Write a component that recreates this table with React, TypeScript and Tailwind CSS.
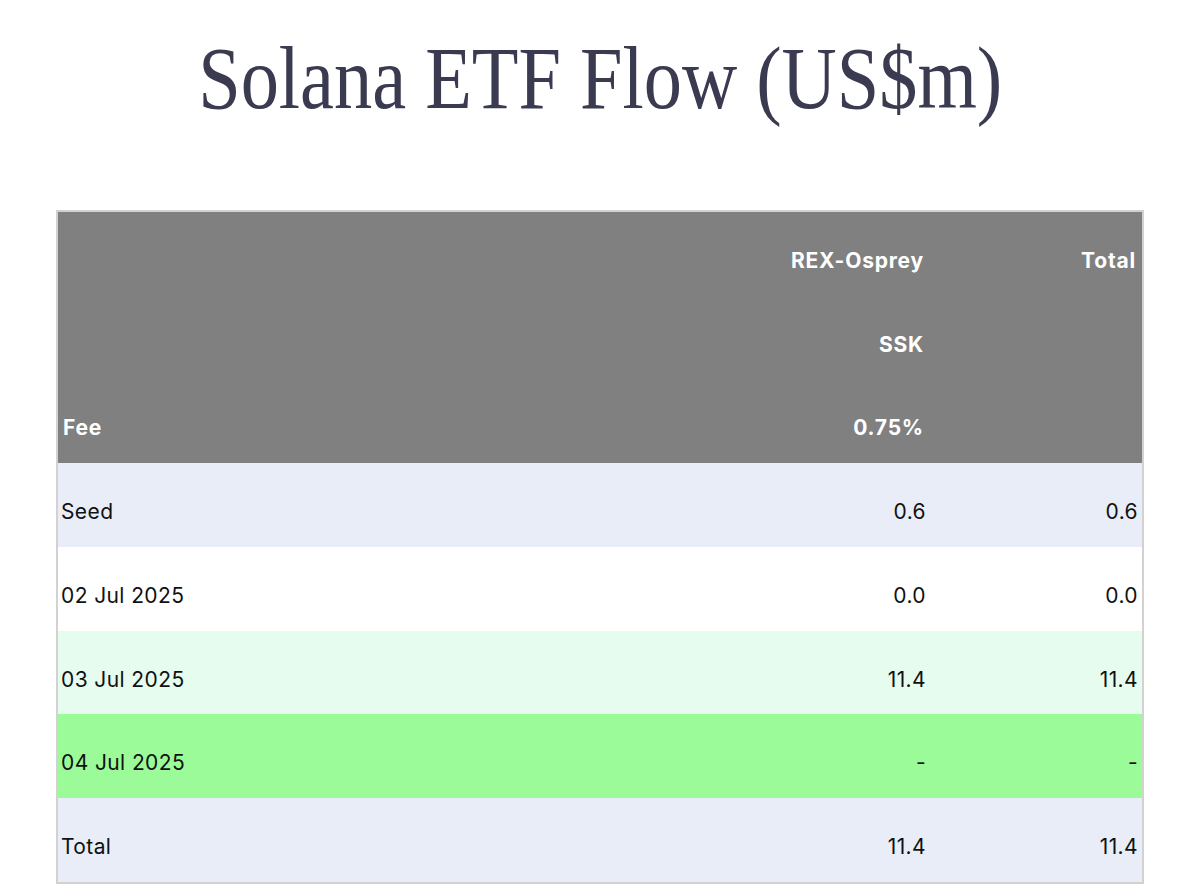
const rows = [
  { label: 'Seed', rex: '0.6', total: '0.6', bg: 'bg-[#e8edf7]', h: 'h-[84px]' },
  { label: '02 Jul 2025', rex: '0.0', total: '0.0', bg: 'bg-white', h: 'h-[84px]' },
  { label: '03 Jul 2025', rex: '11.4', total: '11.4', bg: 'bg-[#e6fcee]', h: 'h-[83px]' },
  { label: '04 Jul 2025', rex: '-', total: '-', bg: 'bg-[#9afb98]', h: 'h-[84px]' },
  { label: 'Total', rex: '11.4', total: '11.4', bg: 'bg-[#e8edf7]', h: 'h-[84px]' },
]

export default function App() {
  return (
    <div className="w-[1200px] h-[896px] bg-white overflow-hidden">
      {/* Title */}
      <div className="pt-[35px] flex justify-center">
        <h1
          className="inline-block h-[88px] text-[88px] leading-none text-[#3a3a50] scale-x-[0.868] whitespace-nowrap"
          style={{ fontFamily: '"Liberation Serif", "Times New Roman", serif' }}
        >
          Solana ETF Flow (US$m)
        </h1>
      </div>

      {/* Table */}
      <div
        className="mx-[56px] mt-[87px] border-2 border-[#d2d2d2] text-[21px] text-[#111]"
        style={{ fontFamily: 'Inter, "Noto Sans", sans-serif' }}
      >
        {/* Header */}
        <div className="grid grid-cols-[660px_212px_212px] grid-rows-[84px_83px_84px] bg-[#808080] font-bold text-white tracking-[0.8px]">
          <div />
          <div className="flex items-center justify-end pr-[6px] pt-[14px]">REX-Osprey</div>
          <div className="flex items-center justify-end pr-[6px] pt-[14px]">Total</div>
          <div />
          <div className="flex items-center justify-end pr-[6px] pt-[14px]">SSK</div>
          <div />
          <div className="flex items-center pl-[5px] pt-[14px]">Fee</div>
          <div className="flex items-center justify-end pr-[6px] pt-[14px]">0.75%</div>
          <div />
        </div>

        {/* Body */}
        {rows.map((r) => (
          <div key={r.label} className={`grid grid-cols-[660px_212px_212px] tracking-[0.4px] ${r.bg} ${r.h}`}>
            <div className="flex items-center pl-[3px] pt-[14px]">{r.label}</div>
            <div className="flex items-center justify-end pr-[4px] pt-[14px]">{r.rex}</div>
            <div className="flex items-center justify-end pr-[4px] pt-[14px]">{r.total}</div>
          </div>
        ))}
      </div>
    </div>
  )
}
